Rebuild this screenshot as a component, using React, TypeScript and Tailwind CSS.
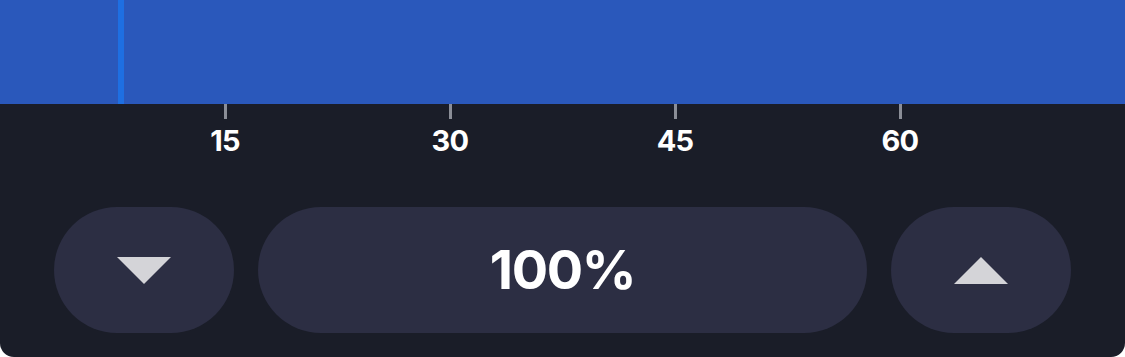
const ticks = ['15', '30', '45', '60']

function Triangle({ up }: { up?: boolean }) {
  return (
    <svg width="54" height="27" viewBox="0 0 54 27" className="block">
      <polygon points={up ? '27,0 54,27 0,27' : '0,0 54,0 27,27'} fill="#d4d4d8" />
    </svg>
  )
}

export default function App() {
  return (
    <div className="w-[1125px] h-[357px] bg-white" style={{ fontFamily: 'Inter, "Noto Sans", sans-serif' }}>
      <div className="h-full bg-[#1a1d28] rounded-b-[14px] overflow-hidden flex flex-col">
        {/* timeline track */}
        <div className="relative h-[104px] bg-[#2a58bb]">
          <div className="absolute left-[118px] top-0 h-full w-[6px] bg-[#1e6fe2]" />
        </div>

        {/* scale */}
        <div className="flex pl-[175px] gap-[125px]">
          {ticks.map((t) => (
            <div key={t} className="w-[100px] flex flex-col items-center">
              <div className="w-[3px] h-[15px] bg-[#8b8e97]" />
              <div className="mt-[7px] text-[29px] leading-[30px] font-bold tracking-tight text-white">{t}</div>
            </div>
          ))}
        </div>

        {/* zoom controls */}
        <div className="mt-auto flex gap-[24px] px-[54px] pb-[24px]">
          <button className="w-[180px] h-[126px] rounded-full bg-[#2c2e43] flex items-center justify-center">
            <Triangle />
          </button>
          <div className="flex-1 h-[126px] rounded-full bg-[#2c2e43] flex items-center justify-center text-[54px] leading-none font-bold tracking-tight text-white">
            100%
          </div>
          <button className="w-[180px] h-[126px] rounded-full bg-[#2c2e43] flex items-center justify-center">
            <Triangle up />
          </button>
        </div>
      </div>
    </div>
  )
}
